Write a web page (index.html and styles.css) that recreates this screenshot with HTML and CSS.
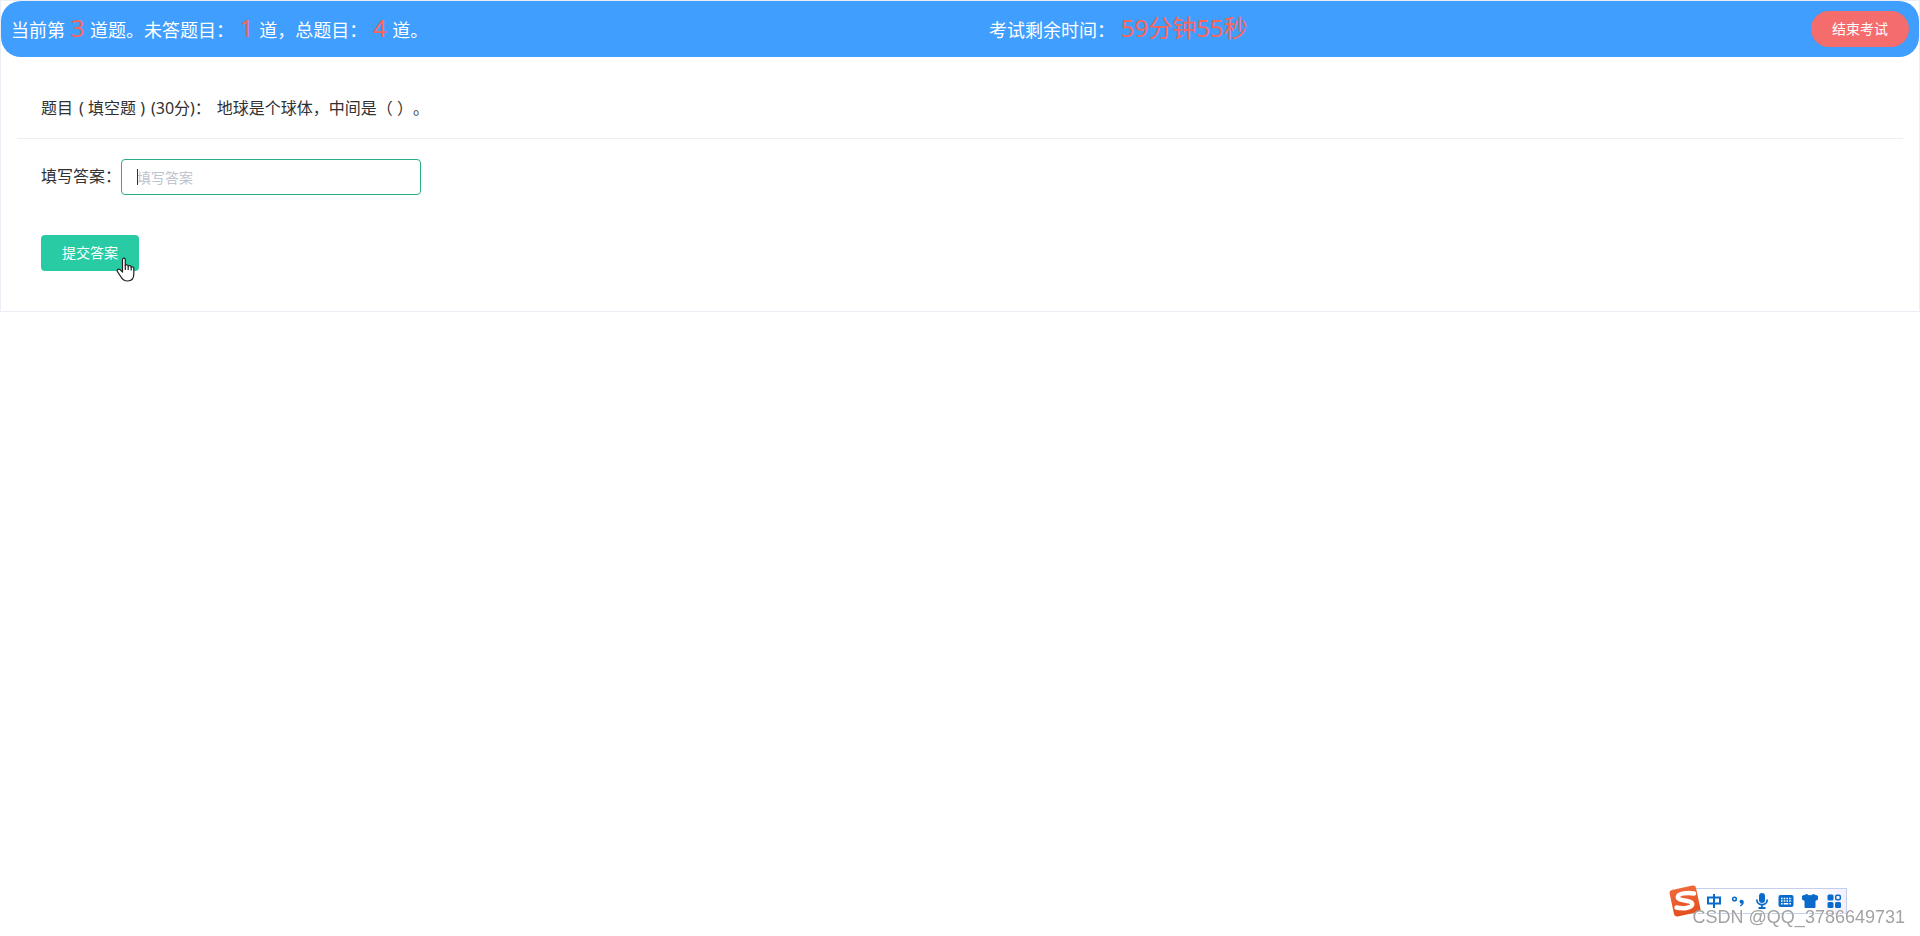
FILE: index.html
```html
<!DOCTYPE html>
<html lang="zh-CN">
<head>
  <meta charset="utf-8">
  <meta name="viewport" content="width=device-width, initial-scale=1">
  <title>在线考试</title>
  <link rel="stylesheet" href="styles.css">
</head>
<body>
  <main class="exam">
    <header class="exam-bar">
      <p class="exam-progress">当前第 <span class="num">3</span> 道题。未答题目： <span class="num">1</span> 道，总题目： <span class="num">4</span> 道。</p>
      <p class="exam-timer">考试剩余时间： <span class="num">59分钟55秒</span></p>
      <div class="exam-actions"><button class="btn btn-danger" type="button">结束考试</button></div>
    </header>
    <form class="question">
      <h1 class="question-title"><span>题目</span> <span>( 填空题 )</span> <span>(30分)：</span> <span>地球是个球体，中间是（ ）。</span></h1>
      <div class="question-body">
        <div class="answer">
          <label class="answer-label" for="answer">填写答案：</label>
          <div class="answer-field">
            <input class="answer-input" id="answer" type="text" placeholder="填写答案">
            <span class="caret"></span>
          </div>
        </div>
        <div class="submit">
          <button class="btn btn-submit" type="button">提交答案</button>
          <svg class="pointer" width="20" height="26" viewBox="0 0 20 26" aria-hidden="true">
            <path d="M6.500 14V2.800C6.500 .6 9.300 .6 9.300 2.800V8.500C9.800 7.300 12 7.500 12.200 9.200C13 8.200 15 8.500 15.200 10.100C16.300 9.400 17.800 10 17.800 11.600V17C17.800 21 15.800 24 11.500 24C8 24 6.500 22.500 5 20L1.500 14.600C.3 12.600 2.600 11.400 4 12.600L6.500 15Z" fill="#fff" stroke="#222" stroke-width="1.200" stroke-linejoin="round"/>
            <path d="M9.300 8V13M12.200 9V13M15.200 10V13.500" fill="none" stroke="#222" stroke-width="1.200"/>
          </svg>
        </div>
      </div>
    </form>
  </main>

  <aside class="ime">
    <svg class="ime-logo" width="32" height="32" viewBox="0 0 32 32" aria-hidden="true">
      <defs><linearGradient id="g" x1="0" y1="0" x2="0" y2="1"><stop offset="0" stop-color="#f0683a"/><stop offset="1" stop-color="#e4501f"/></linearGradient></defs>
      <rect x="2.500" y="2.500" width="27" height="27" rx="3" fill="url(#g)" transform="rotate(-12 16 16)"/>
      <path d="M25 8.500C19 7.500 9 8 8.800 12.200C8.600 16.500 23.500 14.500 23.300 19.200C23.100 23.500 13 23.800 7.500 22.500" fill="none" stroke="#fff" stroke-width="4.400" stroke-linecap="round"/>
    </svg>
    <div class="ime-tools">
      <svg width="16" height="16" viewBox="0 0 16 16" aria-hidden="true"><path d="M2 4.500H14V10.500H2ZM8 1V15" fill="none" stroke="#0b6bcb" stroke-width="2"/></svg>
      <svg width="16" height="16" viewBox="0 0 16 16" aria-hidden="true"><circle cx="4.500" cy="6" r="1.800" fill="none" stroke="#0b6bcb" stroke-width="1.600"/><path d="M9.500 8.300C9.500 6 13.800 6 13.800 9C13.800 11.300 12.500 12.900 10.300 13.400L10 12.300C11.200 11.900 11.700 11.200 11.600 10.600C10.400 10.800 9.500 9.600 9.500 8.300Z" fill="#0b6bcb"/></svg>
      <svg width="16" height="16" viewBox="0 0 16 16" aria-hidden="true"><rect x="5" y="0" width="6" height="10" rx="3" fill="#0b6bcb"/><path d="M2.800 6.500C2.800 13.500 13.200 13.500 13.200 6.500M8 12V15M4.500 15H11.500" fill="none" stroke="#0b6bcb" stroke-width="1.800"/></svg>
      <svg width="16" height="16" viewBox="0 0 16 16" aria-hidden="true"><rect x=".5" y="2" width="15" height="12" rx="2" fill="#0b6bcb"/><path d="M3 5.500H14M3 8H14" stroke="#fff" stroke-width="1.500" stroke-dasharray="1.600 1.100"/><path d="M3 10.700H4.600M5.700 10.700H10.300M11.400 10.700H13" stroke="#fff" stroke-width="1.500"/></svg>
      <svg width="16" height="16" viewBox="0 0 16 16" aria-hidden="true"><path d="M5 1.500C6 3.200 10 3.200 11 1.500L15.500 3V6.500L13 7.500V14.500H3V7.500L.5 6.500V3Z" fill="#0b6bcb" stroke="#0b6bcb" stroke-linejoin="round"/></svg>
      <svg width="16" height="16" viewBox="0 0 16 16" aria-hidden="true"><rect x="1.500" y="1.500" width="6" height="6" rx="1.500" fill="#0b6bcb"/><rect x="1.500" y="9" width="6" height="6" rx="1.500" fill="#0b6bcb"/><rect x="9" y="9" width="6" height="6" rx="1.500" fill="#0b6bcb"/><rect x="9.700" y="2.200" width="4.600" height="4.600" rx="1.200" fill="none" stroke="#0b6bcb" stroke-width="1.500"/></svg>
    </div>
  </aside>
  <p class="watermark">CSDN @QQ_3786649731</p>
</body>
</html>
```
FILE: styles.css
```css
* {
  box-sizing: border-box;
}

body {
  margin: 0;
  background: #fff;
  color: #303133;
  font-family: "Noto Sans", "Noto Sans CJK SC", sans-serif;
  font-size: 16px;
  text-spacing-trim: space-all;
}

.exam {
  border: 1px solid #ebeef5;
}

.exam-bar {
  display: grid;
  grid-template-columns: 978fr 539fr 381fr;
  align-items: center;
  height: 56px;
  padding: 0 10px;
  border-radius: 20px;
  background: #409eff;
  color: #fff;
  font-size: 18px;
  line-height: 36px;
}

.exam-progress,
.exam-timer {
  margin: 0;
  white-space: nowrap;
}

.num {
  margin: 0 1px;
  color: #fb6558;
  font-size: 24px;
}

.exam-actions {
  display: flex;
  justify-content: flex-end;
}

.btn {
  height: 36px;
  padding: 0 20px;
  border: 1px solid transparent;
  border-radius: 4px;
  color: #fff;
  font-family: inherit;
  font-size: 14px;
  line-height: 20px;
  cursor: pointer;
}

.btn-danger {
  border-radius: 20px;
  background: #f56c6c;
}

.btn-submit {
  background: #28cba3;
}

.question {
  padding: 21px 16px 40px;
}

.question-title {
  display: flex;
  flex-wrap: wrap;
  gap: 0 6px;
  margin: 0;
  padding: 20px 24px;
  border-bottom: 1px solid #ebeef5;
  font-size: 16px;
  font-weight: 400;
  line-height: 20px;
}

.question-body {
  display: flex;
  flex-direction: column;
  gap: 40px;
  padding: 20px 24px 0;
}

.answer {
  display: flex;
}

.answer-label {
  line-height: 34px;
}

.answer-field {
  position: relative;
  width: 300px;
}

.answer-input {
  display: block;
  width: 100%;
  height: 36px;
  padding: 0 15px;
  border: 1px solid #2aae8a;
  border-radius: 4px;
  outline: 0;
  background: #fff;
  color: #606266;
  font-family: inherit;
  font-size: 14px;
}

.answer-input::placeholder {
  color: #c0c4cc;
}

.caret {
  position: absolute;
  top: 10px;
  left: 16px;
  width: 1px;
  height: 16px;
  background: #303133;
}

.submit {
  position: relative;
  display: flex;
}

.pointer {
  position: absolute;
  top: 22px;
  left: 75px;
}

.ime {
  position: fixed;
  right: 73px;
  bottom: 19px;
  display: flex;
  align-items: center;
}

.ime-logo {
  z-index: 1;
  margin-right: -18px;
}

.ime-tools {
  display: flex;
  align-items: center;
  gap: 8px;
  height: 26px;
  padding: 0 4px 0 22px;
  border: 1px solid #c3cdec;
  background: linear-gradient(90deg, #fff 80%, #f3effc);
}

.watermark {
  position: fixed;
  right: 15px;
  bottom: 9px;
  z-index: 2;
  margin: 0;
  color: #a3a3a3;
  font-family: "Liberation Sans", Arial, sans-serif;
  font-size: 18px;
  line-height: 20px;
  text-shadow: 1px 1px 0 #fff;
}
```
